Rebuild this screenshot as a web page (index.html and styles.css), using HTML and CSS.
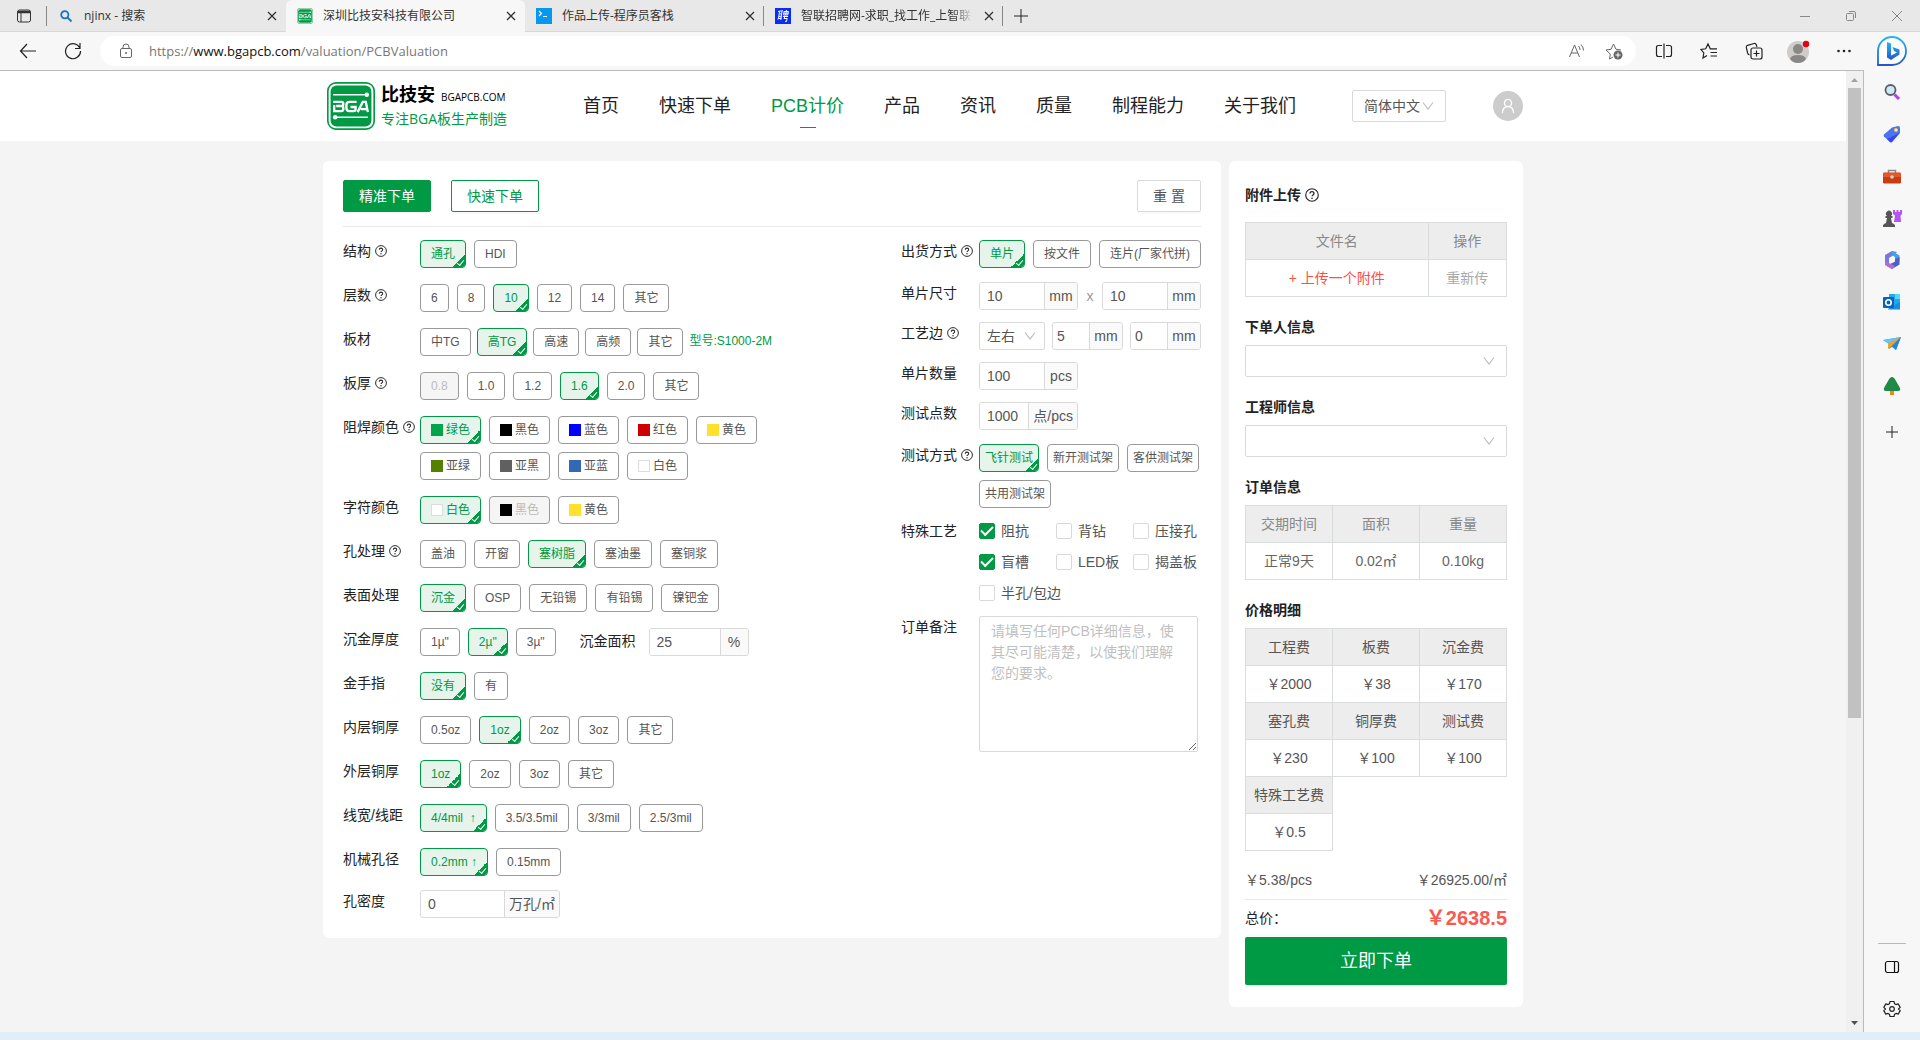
FILE: index.html
```html
<!DOCTYPE html>
<html lang="zh-CN">
<head>
<meta charset="utf-8">
<title>深圳比技安科技有限公司</title>
<link rel="stylesheet" href="styles.css">
</head>
<body>
<svg class="defs" aria-hidden="true">
  <symbol id="help" viewBox="0 0 14 14"><circle cx="7" cy="7" r="6.3" fill="none" stroke="currentColor" stroke-width="1.1"/><path d="M5 5.6c0-2.6 4-2.6 4 0 0 1.3-2 1.3-2 2.7" fill="none" stroke="currentColor" stroke-width="1.2"/><circle cx="7" cy="10.2" r=".8" fill="currentColor"/></symbol>
  <symbol id="chevron" viewBox="0 0 12 12"><path d="M1 2.5l5 6.5 5-6.5" fill="none" stroke="currentColor" stroke-width="1.1"/></symbol>
  <symbol id="close" viewBox="0 0 12 12"><path d="M2 2l8 8M10 2l-8 8" fill="none" stroke="currentColor" stroke-width="1.3"/></symbol>
  <symbol id="logo" viewBox="0 0 47 47"><rect x=".8" y=".8" width="45.400" height="45.400" rx="8" fill="#fff" stroke="#009944" stroke-width="1.600"/><rect x="3.500" y="3.500" width="40" height="40" rx="6" fill="#009944"/><path d="M6 12.500h31M9 34.500h31" stroke="#fff" stroke-width="1.500"/><circle cx="39" cy="12.500" r="2.200" fill="#fff"/><circle cx="8" cy="34.500" r="2.200" fill="#fff"/><path d="M6 19.500h8q2 0 2 2t-2 2h-5m5 0q2 0 2 2.500t-2 2.500H7v-6M29 19.500h-7q-3 0-3 3v3q0 3 3 3h4q2 0 2-2v-2h-5M30 29.500l5-10h3l2 10m-7-3h6" fill="none" stroke="#fff" stroke-width="2.300"/></symbol>
</svg>

<header class="tabs">
  <button class="tab-menu" aria-label="标签页操作"><svg width="16" height="16" viewBox="0 0 16 16" fill="none" stroke="#333"><rect x="1.500" y="2" width="13" height="12" rx="2"/><path d="M2 4h12" stroke-width="2.500"/><path d="M5 5v9"/></svg></button>
  <div class="tab">
    <svg class="favicon" viewBox="0 0 16 16" fill="none" stroke="#1a73c7" stroke-width="1.800"><circle cx="6.800" cy="6.800" r="3.600"/><path d="M9.500 9.500l4 4"/></svg>
    <span class="tab-title">njinx - 搜索</span><button class="tab-close" aria-label="关闭"><svg><use href="#close"/></svg></button>
  </div>
  <div class="tab active">
    <svg class="favicon"><use href="#logo"/></svg>
    <span class="tab-title">深圳比技安科技有限公司</span><button class="tab-close" aria-label="关闭"><svg><use href="#close"/></svg></button>
  </div>
  <div class="tab divided">
    <svg class="favicon" viewBox="0 0 16 16"><path fill="#0797ee" d="M0 0h16v16H0z"/><path d="M3 3l2.500 2.500L3 8M7 8.500h4" fill="none" stroke="#fff" stroke-width="1.200"/></svg>
    <span class="tab-title">作品上传-程序员客栈</span><button class="tab-close" aria-label="关闭"><svg><use href="#close"/></svg></button>
  </div>
  <div class="tab divided">
    <svg class="favicon" viewBox="0 0 16 16"><path fill="#0a2df5" d="M0 0h16v16H0z"/><path d="M3 3.500l5-.800M4.500 3.500l-1 7M7 3l-1.200 9M4.400 6l2-.3M4 8.500l2-.3M2.500 11l4-1M9 3.500h4.500l-.800 3.500H8.600zM8.800 5.200h4.500M11.500 2l-.800 5M8 8.500h5M10 8.500l-1 2h3.200l-.7 3-1.500-.2" fill="none" stroke="#fff" stroke-width="1"/></svg>
    <span class="tab-title faded">智联招聘网-求职_找工作_上智联招</span><button class="tab-close" aria-label="关闭"><svg><use href="#close"/></svg></button>
  </div>
  <button class="new-tab" aria-label="新建标签页"><svg width="16" height="16" viewBox="0 0 16 16" stroke="#222"><path d="M8 1v14M1 8h14"/></svg></button>
  <div class="window-buttons">
    <button aria-label="最小化"><svg width="12" height="12" viewBox="0 0 12 12"><path d="M1 6.500h10"/></svg></button>
    <button aria-label="还原"><svg width="12" height="12" viewBox="0 0 12 12"><rect x="1.500" y="3.500" width="7" height="7" rx="1"/><path d="M4 1.500h5q1.500 0 1.500 1.500v5"/></svg></button>
    <button aria-label="关闭窗口"><svg width="12" height="12" viewBox="0 0 12 12"><path d="M1 1l10 10M11 1L1 11"/></svg></button>
  </div>
</header>

<div class="toolbar">
  <button class="tool nav-tool" aria-label="后退"><svg width="18" height="18" viewBox="0 0 18 18"><path d="M17 9H1.500M8 2L1.500 9 8 16"/></svg></button>
  <button class="tool nav-tool" aria-label="刷新"><svg width="18" height="18" viewBox="0 0 18 18"><path d="M16 6.500A7.500 7.500 0 1 0 16.500 9M16 1v5.500h-5"/></svg></button>
  <div class="address">
    <svg width="14" height="16" viewBox="0 0 14 16" fill="none" stroke="#666"><rect x="1.500" y="5.500" width="11" height="9" rx="1.500"/><path d="M4 5.500V4q0-3 3-3t3 3v1.500"/><circle cx="7" cy="10" r=".6" fill="#666"/></svg>
    <span class="url">https://<b>www.bgapcb.com</b>/valuation/PCBValuation</span>
    <button aria-label="大声朗读"><svg width="18" height="18" viewBox="0 0 18 18" fill="none" stroke="#666"><path d="M1.500 15L6.500 3l5 12M3 11h7M10.500 4q1.500 1.500 1.500 4M13 2.500q2.500 2.500 2.500 6"/></svg></button>
    <button aria-label="收藏此页"><svg width="18" height="18" viewBox="0 0 18 18" fill="none" stroke="#666"><path d="M8 15l-3.500 2 .8-5L1 8l5-.7L8.500 2 11 7.300l5 .7"/><circle cx="13" cy="13" r="4.500" fill="#666" stroke="none"/><path d="M13 10.500v5M10.500 13h5" stroke="#fff"/></svg></button>
  </div>
  <button class="tool" aria-label="拆分屏幕"><svg width="18" height="18" viewBox="0 0 18 18"><path d="M7 3.500H3.500q-2 0-2 2v7q0 2 2 2H7M11 3.500h3.500q2 0 2 2v7q0 2-2 2H11M9 1.500v15"/></svg></button>
  <button class="tool" aria-label="收藏夹"><svg width="18" height="18" viewBox="0 0 18 18"><path d="M7 13.500L3 16l.8-5L1 7.500l4.700-.7L8 2l2.300 4.800H17M10.500 10.500H17M10.500 14H17"/></svg></button>
  <button class="tool" aria-label="集锦"><svg width="18" height="18" viewBox="0 0 18 18"><path d="M4.500 13Q3 12.500 2.600 11L1.300 5.500Q1 3.800 2.600 3.300L9 1.500q1.700-.4 2.300 1.200L12 5"/><rect x="6" y="6" width="11" height="11" rx="2"/><path d="M11.500 8.500v6M8.500 11.500h6"/></svg></button>
  <button class="tool" aria-label="个人资料"><svg class="solid" width="26" height="26" viewBox="0 0 26 26"><circle cx="12" cy="14" r="11" fill="#cfccca"/><circle cx="12" cy="11" r="5" fill="#8a8886"/><path d="M4 21q1-4 8-4t8 4q-3 4-8 4t-8-4z" fill="#8a8886"/><circle cx="20" cy="6" r="3.200" fill="#e60012"/></svg></button>
  <button class="tool" aria-label="更多"><svg class="solid" width="18" height="18" viewBox="0 0 18 18"><circle cx="3.500" cy="9" r="1.300" fill="#222"/><circle cx="9" cy="9" r="1.300" fill="#222"/><circle cx="14.500" cy="9" r="1.300" fill="#222"/></svg></button>
  <button class="tool bing" aria-label="必应"><svg width="32" height="32" viewBox="0 0 32 32"><defs><linearGradient id="bg" x1="0" y1="0" x2="0" y2="1"><stop offset="0" stop-color="#22b8f0"/><stop offset="1" stop-color="#2457c8"/></linearGradient></defs><path d="M2 30V16A14 14 0 1 1 16 30z" fill="#fff" stroke="url(#bg)" stroke-width="1.800"/><path d="M11 7l4 1.500v12l6-3-3-1.500-1.500-4 7 2.500v5L15 25l-4-2.500z" fill="url(#bg)" stroke="none"/></svg></button>
</div>

<div class="browser-body">
<div class="page">
  <div class="site-header">
    <div class="container header-row">
      <a class="brand" href="#">
        <svg width="48" height="48"><use href="#logo"/></svg>
        <span class="brand-text"><span class="brand-name"><strong>比技安</strong><small>BGAPCB.COM</small></span><span class="slogan">专注BGA板生产制造</span></span>
      </a>
      <nav class="menu">
        <a href="#">首页</a><a href="#">快速下单</a><a href="#" class="current">PCB计价</a><a href="#">产品</a><a href="#">资讯</a><a href="#">质量</a><a href="#">制程能力</a><a href="#">关于我们</a>
      </nav>
      <div class="select language"><select aria-label="语言"><option>简体中文</option></select><svg><use href="#chevron"/></svg></div>
      <a class="user" href="#" aria-label="用户"><svg width="18" height="18" viewBox="0 0 18 18" fill="none" stroke="#fff" stroke-width="1.300"><circle cx="9" cy="6" r="3.600"/><path d="M3.500 16q0-6.400 5.500-6.400t5.500 6.400"/></svg></a>
    </div>
  </div>

  <main class="container content">
    <form class="panel order">
      <div class="actions">
        <button type="button" class="btn primary">精准下单</button>
        <button type="button" class="btn outline">快速下单</button>
        <button type="reset" class="btn reset">重 置</button>
      </div>
      <div class="columns">
        <div class="left">
          <div class="row"><span class="label" id="g1">结构<svg><use href="#help"/></svg></span><div class="options" role="radiogroup" aria-labelledby="g1">
            <label class="option"><input type="radio" name="g1" checked>通孔</label><label class="option"><input type="radio" name="g1">HDI</label></div></div>
          <div class="row"><span class="label" id="g2">层数<svg><use href="#help"/></svg></span><div class="options" role="radiogroup" aria-labelledby="g2">
            <label class="option"><input type="radio" name="g2">6</label><label class="option"><input type="radio" name="g2">8</label><label class="option"><input type="radio" name="g2" checked>10</label><label class="option"><input type="radio" name="g2">12</label><label class="option"><input type="radio" name="g2">14</label><label class="option"><input type="radio" name="g2">其它</label></div></div>
          <div class="row"><span class="label" id="g3">板材</span><div class="options tight" role="radiogroup" aria-labelledby="g3">
            <label class="option"><input type="radio" name="g3">中TG</label><label class="option"><input type="radio" name="g3" checked>高TG</label><label class="option"><input type="radio" name="g3">高速</label><label class="option"><input type="radio" name="g3">高频</label><label class="option"><input type="radio" name="g3">其它</label><span class="model">型号:S1000-2M</span></div></div>
          <div class="row"><span class="label" id="g4">板厚<svg><use href="#help"/></svg></span><div class="options" role="radiogroup" aria-labelledby="g4">
            <label class="option"><input type="radio" name="g4" disabled>0.8</label><label class="option"><input type="radio" name="g4">1.0</label><label class="option"><input type="radio" name="g4">1.2</label><label class="option"><input type="radio" name="g4" checked>1.6</label><label class="option"><input type="radio" name="g4">2.0</label><label class="option"><input type="radio" name="g4">其它</label></div></div>
          <div class="row"><span class="label" id="g5">阻焊颜色<svg><use href="#help"/></svg></span><div class="options colors" role="radiogroup" aria-labelledby="g5">
            <label class="option"><input type="radio" name="g5" checked><i class="swatch green"></i>绿色</label><label class="option"><input type="radio" name="g5"><i class="swatch black"></i>黑色</label><label class="option"><input type="radio" name="g5"><i class="swatch blue"></i>蓝色</label><label class="option"><input type="radio" name="g5"><i class="swatch red"></i>红色</label><label class="option"><input type="radio" name="g5"><i class="swatch yellow"></i>黄色</label><label class="option"><input type="radio" name="g5"><i class="swatch matte-green"></i>亚绿</label><label class="option"><input type="radio" name="g5"><i class="swatch matte-black"></i>亚黑</label><label class="option"><input type="radio" name="g5"><i class="swatch matte-blue"></i>亚蓝</label><label class="option"><input type="radio" name="g5"><i class="swatch white"></i>白色</label></div></div>
          <div class="row"><span class="label" id="g6">字符颜色</span><div class="options" role="radiogroup" aria-labelledby="g6">
            <label class="option"><input type="radio" name="g6" checked><i class="swatch white"></i>白色</label><label class="option"><input type="radio" name="g6" disabled><i class="swatch black"></i>黑色</label><label class="option"><input type="radio" name="g6"><i class="swatch yellow"></i>黄色</label></div></div>
          <div class="row"><span class="label" id="g7">孔处理<svg><use href="#help"/></svg></span><div class="options" role="radiogroup" aria-labelledby="g7">
            <label class="option"><input type="radio" name="g7">盖油</label><label class="option"><input type="radio" name="g7">开窗</label><label class="option"><input type="radio" name="g7" checked>塞树脂</label><label class="option"><input type="radio" name="g7">塞油墨</label><label class="option"><input type="radio" name="g7">塞铜浆</label></div></div>
          <div class="row"><span class="label" id="g8">表面处理</span><div class="options" role="radiogroup" aria-labelledby="g8">
            <label class="option"><input type="radio" name="g8" checked>沉金</label><label class="option"><input type="radio" name="g8">OSP</label><label class="option"><input type="radio" name="g8">无铅锡</label><label class="option"><input type="radio" name="g8">有铅锡</label><label class="option"><input type="radio" name="g8">镍钯金</label></div></div>
          <div class="row"><span class="label" id="g9">沉金厚度</span><div class="options" role="radiogroup" aria-labelledby="g9">
            <label class="option"><input type="radio" name="g9">1µ"</label><label class="option"><input type="radio" name="g9" checked>2µ"</label><label class="option"><input type="radio" name="g9">3µ"</label></div>
            <label class="label inline" for="gold-area">沉金面积</label><div class="field area"><input id="gold-area" value="25"><span class="unit">%</span></div></div>
          <div class="row"><span class="label" id="g10">金手指</span><div class="options" role="radiogroup" aria-labelledby="g10">
            <label class="option"><input type="radio" name="g10" checked>没有</label><label class="option"><input type="radio" name="g10">有</label></div></div>
          <div class="row"><span class="label" id="g11">内层铜厚</span><div class="options" role="radiogroup" aria-labelledby="g11">
            <label class="option"><input type="radio" name="g11">0.5oz</label><label class="option"><input type="radio" name="g11" checked>1oz</label><label class="option"><input type="radio" name="g11">2oz</label><label class="option"><input type="radio" name="g11">3oz</label><label class="option"><input type="radio" name="g11">其它</label></div></div>
          <div class="row"><span class="label" id="g12">外层铜厚</span><div class="options" role="radiogroup" aria-labelledby="g12">
            <label class="option"><input type="radio" name="g12" checked>1oz</label><label class="option"><input type="radio" name="g12">2oz</label><label class="option"><input type="radio" name="g12">3oz</label><label class="option"><input type="radio" name="g12">其它</label></div></div>
          <div class="row"><span class="label" id="g13">线宽/线距</span><div class="options" role="radiogroup" aria-labelledby="g13">
            <label class="option"><input type="radio" name="g13" checked>4/4mil&nbsp; ↑</label><label class="option"><input type="radio" name="g13">3.5/3.5mil</label><label class="option"><input type="radio" name="g13">3/3mil</label><label class="option"><input type="radio" name="g13">2.5/3mil</label></div></div>
          <div class="row"><span class="label" id="g14">机械孔径</span><div class="options" role="radiogroup" aria-labelledby="g14">
            <label class="option"><input type="radio" name="g14" checked>0.2mm ↑</label><label class="option"><input type="radio" name="g14">0.15mm</label></div></div>
          <div class="row last"><label class="label" for="density">孔密度</label><div class="field density"><input id="density" value="0"><span class="unit">万孔/㎡</span></div></div>
        </div>

        <div class="right">
          <div class="row"><span class="label" id="r1">出货方式<svg><use href="#help"/></svg></span><div class="options single" role="radiogroup" aria-labelledby="r1">
            <label class="option"><input type="radio" name="r1" checked>单片</label><label class="option"><input type="radio" name="r1">按文件</label><label class="option"><input type="radio" name="r1">连片(厂家代拼)</label></div></div>
          <div class="row compact"><label class="label" for="len">单片尺寸</label><div class="fields"><div class="field size"><input id="len" value="10"><span class="unit">mm</span></div><span class="times">x</span><div class="field size"><input aria-label="单片宽度" value="10"><span class="unit">mm</span></div></div></div>
          <div class="row compact"><label class="label" for="edge">工艺边<svg><use href="#help"/></svg></label><div class="fields"><div class="select small"><select id="edge"><option>左右</option></select><svg><use href="#chevron"/></svg></div><div class="field narrow"><input aria-label="工艺边宽度" value="5"><span class="unit">mm</span></div><div class="field narrow"><input aria-label="工艺边高度" value="0"><span class="unit">mm</span></div></div></div>
          <div class="row compact"><label class="label" for="count">单片数量</label><div class="field size"><input id="count" value="100"><span class="unit">pcs</span></div></div>
          <div class="row"><label class="label" for="points">测试点数</label><div class="field size"><input id="points" value="1000"><span class="unit">点/pcs</span></div></div>
          <div class="row compact"><span class="label" id="r2">测试方式<svg><use href="#help"/></svg></span><div class="options slim" role="radiogroup" aria-labelledby="r2">
            <label class="option"><input type="radio" name="r2" checked>飞针测试</label><label class="option"><input type="radio" name="r2">新开测试架</label><label class="option"><input type="radio" name="r2">客供测试架</label><label class="option"><input type="radio" name="r2">共用测试架</label></div></div>
          <div class="row compact"><span class="label" id="r3">特殊工艺</span><div class="checks" role="group" aria-labelledby="r3">
            <label><input type="checkbox" checked>阻抗</label><label><input type="checkbox">背钻</label><label><input type="checkbox">压接孔</label><label><input type="checkbox" checked>盲槽</label><label><input type="checkbox">LED板</label><label><input type="checkbox">揭盖板</label><label class="wide"><input type="checkbox">半孔/包边</label></div></div>
          <div class="row last"><label class="label" for="remark">订单备注</label><textarea id="remark" placeholder="请填写任何PCB详细信息，使其尽可能清楚，以使我们理解您的要求。"></textarea></div>
        </div>
      </div>
    </form>

    <aside class="panel summary">
      <h2 class="upload-title">附件上传<svg><use href="#help"/></svg></h2>
      <table class="grid files">
        <tr><th class="file-name">文件名</th><th>操作</th></tr>
        <tr><td><button class="upload">+ 上传一个附件</button></td><td><button class="retry">重新传</button></td></tr>
      </table>
      <h2><label for="buyer">下单人信息</label></h2>
      <div class="select"><select id="buyer"><option></option></select><svg><use href="#chevron"/></svg></div>
      <h2><label for="engineer">工程师信息</label></h2>
      <div class="select"><select id="engineer"><option></option></select><svg><use href="#chevron"/></svg></div>
      <h2>订单信息</h2>
      <table class="grid">
        <tr><th>交期时间</th><th>面积</th><th>重量</th></tr>
        <tr><td>正常9天</td><td>0.02㎡</td><td>0.10kg</td></tr>
      </table>
      <h2>价格明细</h2>
      <table class="grid prices">
        <tr><th>工程费</th><th>板费</th><th>沉金费</th></tr>
        <tr><td>￥2000</td><td>￥38</td><td>￥170</td></tr>
        <tr><th>塞孔费</th><th>铜厚费</th><th>测试费</th></tr>
        <tr><td>￥230</td><td>￥100</td><td>￥100</td></tr>
        <tr><th>特殊工艺费</th></tr>
        <tr><td>￥0.5</td></tr>
      </table>
      <div class="unit-price"><span>￥5.38/pcs</span><span>￥26925.00/㎡</span></div>
      <div class="total"><span>总价：</span><strong>￥2638.5</strong></div>
      <button class="submit">立即下单</button>
    </aside>
  </main>
</div>

<div class="scrollbar" aria-hidden="true">
  <svg width="17" height="17" viewBox="0 0 17 17"><path d="M5 11l3.500-4 3.500 4z" fill="#a3a3a3"/></svg>
  <div class="track"><div class="thumb"></div></div>
  <svg width="17" height="17" viewBox="0 0 17 17"><path d="M5 6l3.500 4L12 6z" fill="#505050"/></svg>
</div>

<aside class="sidebar">
  <button aria-label="搜索"><svg width="18" height="18" viewBox="0 0 18 18"><path d="M11.500 11.500l4.500 4.500" stroke="#b03df0" stroke-width="3"/><circle cx="7.500" cy="7" r="5" fill="#cdeafc" stroke="#5b5f64" stroke-width="1.800"/></svg></button>
  <button aria-label="购物"><svg width="18" height="18" viewBox="0 0 18 18"><path d="M9 2.500L15 1q2 0 2 2v5l-8 9q-1 .8-2 0L1 11.500q-.8-1 0-2z" fill="#4a74f4"/><path d="M16.500 8L9 17q-1 .8-2 0l-3-3z" fill="#3a45f0"/><circle cx="13" cy="5" r="1.500" fill="#fff" stroke="#f2c230" stroke-width="1.200"/></svg></button>
  <button aria-label="工具"><svg width="18" height="18" viewBox="0 0 18 18"><path d="M5.500 6V3.500h7V6" fill="none" stroke="#8b8b8b" stroke-width="1.500"/><rect y="5.500" width="18" height="11" rx="1.200" fill="#c73e10"/><path d="M0 6h18v4H0z" fill="#e5572a"/><circle cx="9" cy="10" r="1.800" fill="#d0d0d0"/></svg></button>
  <button aria-label="游戏"><svg width="20" height="20" viewBox="0 0 20 20"><path d="M11 2h2v2h1.500V2h2v2H18V2h2v4l-1.500 1.500L19 14h-7l1-6.500L11 6z" fill="#b455f2"/><path d="M1 19q-.5-3 3-4l1-5H3.500V8H5a3 3 0 1 1 4 0h1.500v2H9l1 5q3.500 1 3 4z" fill="#555"/></svg></button>
  <button aria-label="Microsoft 365"><svg width="18" height="18" viewBox="0 0 18 18"><path d="M9 0L2 4v9l4 3V7l5-3 3-3z" fill="#7b78d8"/><path d="M9 0l7.500 4.500v6L12 8V6L9 4z" fill="#3ca4e8"/><path d="M16.500 6v7.500L9 18l-5-3 5-3 3-1.500V8z" fill="#4c5fc9"/><path d="M2 11v3l7 4 3-3-6-3z" fill="#b46ccf"/><circle cx="9" cy="9" r="2.700" fill="#f7f7f7"/></svg></button>
  <button aria-label="Outlook"><svg width="18" height="18" viewBox="0 0 18 18"><path d="M6 1h11v9L9 16H6z" fill="#28a8ea"/><path d="M12 1h5v5h-5z" fill="#50d9ff"/><path d="M5 16l12-7v7.500H5z" fill="#1490df"/><rect y="4" width="11" height="11" rx="1" fill="#0364b8"/><circle cx="5.500" cy="9.500" r="2.700" fill="none" stroke="#fff" stroke-width="1.600"/></svg></button>
  <button aria-label="投放"><svg width="18" height="18" viewBox="0 0 18 18"><path d="M0 5l18-3-5 13-4-3-3 2V9z" fill="#2f9cf4"/><path d="M0 5l18-3L6 9z" fill="#62c6fb"/><path d="M18 2L5 8.500V14l3-2.500z" fill="#f2a21e"/><path d="M18 2l-9 9 4 4z" fill="#2384e8"/></svg></button>
  <button aria-label="Tree"><svg width="18" height="18" viewBox="0 0 18 18"><path d="M7 12h4v6H7z" fill="#e98a15"/><path d="M9 0q2 0 4 4l4 7q1 3-2 3H3q-3 0-2-3l4-7q2-4 4-4z" fill="#1f8a45"/></svg></button>
  <button class="add" aria-label="自定义"><svg width="14" height="14" viewBox="0 0 14 14" stroke="#222"><path d="M7 1v12M1 7h12"/></svg></button>
  <div class="side-end">
    <button aria-label="隐藏边栏"><svg width="16" height="16" viewBox="0 0 16 16" fill="none" stroke="#111" stroke-width="1.200"><rect x="1.500" y="2.500" width="13" height="11" rx="2"/><path d="M10.500 2.500v11"/></svg></button>
    <button aria-label="设置"><svg width="18" height="18" viewBox="0 0 18 18" fill="none" stroke="#222" stroke-width="1.200"><path d="M7 1.500h4l.6 2.300 1.300.8 2.300-.7 2 3.500L15.500 9l1.700 1.600-2 3.500-2.300-.7-1.300.8-.6 2.300H7l-.6-2.300-1.300-.8-2.300.7-2-3.500L2.500 9 .8 7.400l2-3.500 2.300.7 1.300-.8z" stroke-linejoin="round"/><circle cx="9" cy="9" r="2.300"/></svg></button>
  </div>
</aside>
</div>
<div class="taskbar-edge"></div>
</body>
</html>
```

FILE: styles.css
```css
* { box-sizing: border-box; }
body {
  margin: 0; min-height: 100vh; display: flex; flex-direction: column;
  background: #f7f7f7; color: #222;
  font: 14px/22px "Liberation Sans", "Noto Sans CJK SC", sans-serif;
}
button, input, select, textarea { font: inherit; color: inherit; margin: 0; padding: 0; }
button { background: none; border: 0; cursor: pointer; }
a { color: inherit; text-decoration: none; }
svg { display: block; flex: none; }
.defs { position: absolute; width: 0; height: 0; }

/* browser tabs */
.tabs {
  display: flex; align-items: stretch; height: 32px; background: #e8e8e8; border-bottom: 1px solid #d8d8d8;
  font: 12px/16px "Open Sans", "Noto Sans CJK SC", sans-serif; color: #333;
}
.tab-menu { width: 47px; display: flex; align-items: center; justify-content: center; position: relative; }
.tab-menu::after, .divided::after { content: ""; position: absolute; right: 0; top: 6px; height: 20px; border-right: 1px solid #888; }
.tab { width: 239px; display: flex; align-items: center; gap: 10px; padding: 0 8px 0 11px; position: relative; }
.tab.active { background: #f7f7f7; border-radius: 6px 6px 0 0; margin-bottom: -1px; }
.favicon { width: 16px; height: 16px; }
.tab-title { flex: 1; white-space: nowrap; overflow: hidden; }
.faded { -webkit-mask-image: linear-gradient(90deg, #000 calc(100% - 20px), transparent); mask-image: linear-gradient(90deg, #000 calc(100% - 20px), transparent); }
.tab-close svg { width: 12px; height: 12px; }
.new-tab { width: 36px; display: flex; align-items: center; justify-content: center; }
.window-buttons { margin-left: auto; display: flex; }
.window-buttons button { width: 46px; display: flex; align-items: center; justify-content: center; }
.window-buttons svg { fill: none; stroke: #888; }

/* browser toolbar */
.toolbar { display: flex; align-items: center; height: 38px; padding: 0 2px 0 5px; background: #f7f7f7; }
.tool { width: 45px; height: 38px; display: flex; align-items: center; justify-content: center; }
.tool svg { fill: none; stroke: #222; stroke-width: 1.2; }
.tool .solid { stroke: none; }
.bing { width: 52px; }
.address {
  flex: 1; display: flex; align-items: center; gap: 16px; height: 30px; margin: 0 5px; padding: 0 10px 0 19px;
  background: #fff; border-radius: 15px; font: 13px/20px "Open Sans", sans-serif; color: #777;
}
.address button { width: 21px; }
.address .url { flex: 1; }
.url b { font-weight: 400; color: #111; }

.browser-body { flex: 1; display: flex; }
.page { flex: 1; min-width: 0; background: #f4f4f4; border-top: 1px solid #bbb; }
.taskbar-edge { height: 8px; background: #e1edf8; }

/* drawn scrollbar */
.scrollbar { width: 18px; display: flex; flex-direction: column; background: #f0f0f0; border-top: 1px solid #bbb; border-right: 1px solid #bbb; }
.track { flex: 1; padding: 0 2px; }
.thumb { height: 68%; background: #c1c1c1; }

/* browser sidebar */
.sidebar { width: 56px; display: flex; flex-direction: column; align-items: center; padding-top: 1px; }
.sidebar button { width: 42px; height: 42px; display: flex; align-items: center; justify-content: center; }
.sidebar .add { margin-top: 4px; }
.side-end { margin-top: auto; display: flex; flex-direction: column; align-items: center; padding-bottom: 2px; }
.side-end::before { content: ""; width: 28px; border-top: 1px solid #bbb; margin-bottom: 2px; }

/* site header */
.site-header { background: #fff; }
.container { max-width: 1200px; margin: 0 auto; }
.header-row { display: flex; align-items: center; height: 70px; }
.brand { display: flex; align-items: center; gap: 6px; margin-left: 4px; width: 256px; }
.brand-text { display: flex; flex-direction: column; }
.brand-name { display: flex; align-items: baseline; gap: 6px; line-height: 24px; color: #000; }
.brand-name strong { font-size: 18px; }
.brand-name small { font: 10px/24px "Open Sans", sans-serif; }
.slogan { font: 14px/20px "Open Sans", "Noto Sans CJK SC", sans-serif; color: #009944; }
.menu { display: flex; gap: 40px; font-size: 18px; line-height: 42px; white-space: nowrap; }
.current { color: #009944; display: flex; flex-direction: column; align-items: center; position: relative; }
.current::after { content: ""; position: absolute; bottom: -1px; width: 16px; border-top: 1px solid #009944; }
.user { width: 30px; height: 30px; margin-left: auto; border-radius: 50%; background: #ccc; display: flex; align-items: center; justify-content: center; }

/* panels */
.content { display: flex; align-items: flex-start; gap: 8px; padding: 20px 0 25px; }
.panel { background: #fff; border-radius: 6px; }
.order { flex: 1; padding: 19px 20px 20px; }
.actions { display: flex; gap: 20px; padding-bottom: 14px; border-bottom: 1px solid #e8e8e8; }
.btn { height: 32px; padding: 0 15px; border: 1px solid #009944; border-radius: 2px; box-shadow: 0 2px 0 rgba(0, 0, 0, .02); line-height: 30px; }
.primary { background: #009944; color: #fff; }
.outline { background: #fff; color: #009944; }
.reset { margin-left: auto; border-color: #d9d9d9; color: #555; }
.columns { display: grid; grid-template-columns: 1fr 300px; padding-top: 13px; }

.row { display: flex; align-items: flex-start; margin-bottom: 16px; }
.left .row { min-height: 28px; }
.right .row { margin-bottom: 14px; }
.right .compact { margin-bottom: 12px; }
.left .row:nth-last-child(2) { margin-bottom: 14px; }
.row.last { margin-bottom: 0; }
.label { flex: none; width: 77px; display: flex; align-items: center; gap: 4px; }
.right .label { width: 78px; }
.label svg { width: 12px; height: 12px; }
.label.inline { width: 69px; margin-left: 24px; line-height: 26px; }
.options { display: flex; flex-wrap: wrap; gap: 8px; color: #555; font-size: 12px; line-height: 26px; }
.single { flex-wrap: nowrap; }
.tight { gap: 6px; }
.colors { max-width: 348px; }
.option { position: relative; flex: none; display: flex; align-items: center; height: 28px; padding: 0 10px; border: 1px solid #999; border-radius: 4px; overflow: hidden; white-space: nowrap; cursor: pointer; }
.slim .option { padding: 0 5px; }
.option input { position: absolute; opacity: 0; width: 0; height: 0; }
.option:has(:checked) { color: #009944; background: #e6f4eb; border-color: #009944; }
.option:has(:checked)::before { content: ""; position: absolute; right: 0; bottom: 0; width: 13px; height: 13px; background: linear-gradient(135deg, transparent 50%, #009944 50%); }
.option:has(:checked)::after { content: ""; position: absolute; right: 1px; bottom: 3px; width: 6px; height: 3px; border: solid #fff; border-width: 0 0 1px 1px; transform: rotate(-50deg); }
.option:has(:disabled) { color: #bbb; background: #f5f5f5; }
.model { color: #009944; }
.swatch { width: 12px; height: 12px; margin-right: 3px; }
.green { background: #00a44a; }
.black { background: #000; }
.blue { background: #00f; }
.red { background: #c00; }
.yellow { background: #ffe02a; }
.matte-green { background: #558000; }
.matte-black { background: #606060; }
.matte-blue { background: #3468b4; }
.white { background: #fff; border: 1px solid #ddd; }

.fields { flex: 1; display: flex; justify-content: space-between; }
.field { display: flex; height: 28px; border: 1px solid #d9d9d9; border-radius: 3px; color: #555; line-height: 26px; overflow: hidden; }
.field input { flex: 1; width: 0; min-width: 0; border: 0; padding-left: 7px; outline: 0; background: #fff; }
.narrow input { padding-left: 4px; }
.unit { padding: 0 4px; min-width: 33px; text-align: center; background: #fafafa; border-left: 1px solid #d9d9d9; white-space: nowrap; }
.size { width: 99px; }
.narrow { width: 71px; }
.area { width: 100px; }
.area .unit { min-width: 28px; }
.density { width: 140px; }
.times { width: 24px; text-align: center; color: #999; line-height: 28px; }

.select { position: relative; height: 32px; }
.select select { appearance: none; width: 100%; height: 100%; padding: 0 11px; background: #fff; border: 1px solid #d9d9d9; border-radius: 2px; color: #555; }
.select svg { position: absolute; right: 12px; top: 10px; width: 12px; height: 12px; color: #bbb; pointer-events: none; }
.small { width: 66px; height: 28px; }
.small select { padding: 0 7px; }
.small svg { right: 9px; top: 8px; }
.language { width: 94px; margin-left: 56px; }
.language svg { right: 12px; }

.checks { display: grid; grid-template-columns: repeat(3, 77px); row-gap: 9px; color: #555; }
.checks label { display: flex; align-items: center; gap: 6px; white-space: nowrap; }
.checks .wide { grid-column: span 2; }
.checks input { appearance: none; width: 16px; height: 16px; border: 1px solid #d9d9d9; border-radius: 2px; display: grid; place-content: center; }
.checks input:checked { background: #009944; border-color: #009944; }
.checks input:checked::before { content: ""; width: 10px; height: 5px; margin-bottom: 3px; border: solid #fff; border-width: 0 0 2px 2px; transform: rotate(-45deg); }
textarea { width: 219px; height: 136px; padding: 4px 11px !important; border: 1px solid #d9d9d9; border-radius: 2px; line-height: 21px !important; resize: both; }
textarea::placeholder { color: #bfbfbf; }

/* summary */
.summary { width: 294px; padding: 22px 16px; }
h2 { margin: 19px 0 7px; font-size: 14px; line-height: 22px; font-weight: 700; display: flex; align-items: center; gap: 4px; }
h2 svg { width: 14px; height: 14px; }
.upload-title { margin: 0 0 15px; line-height: 24px; }
.grid { border-collapse: collapse; table-layout: fixed; width: 100%; color: #666; text-align: center; }
.grid th, .grid td { height: 37px; padding: 0; border: 1px solid #d9dddd; font-weight: 400; }
.grid th { background: #ededed; color: #888; }
.prices th, .prices td { color: #555; }
.file-name { width: 70%; }
.upload { color: #ff4d40; }
.retry { color: #aaa; }
.unit-price { display: flex; justify-content: space-between; padding: 18px 0 8px; border-bottom: 1px solid #e8e8e8; color: #555; }
.total { display: flex; justify-content: space-between; align-items: center; line-height: 37px; }
.total strong { font-size: 20px; color: #f75a50; }
.submit { width: 100%; height: 48px; border-radius: 2px; background: #009944; color: #fff; font-size: 18px; box-shadow: 0 2px 0 rgba(0, 0, 0, .04); }
```
